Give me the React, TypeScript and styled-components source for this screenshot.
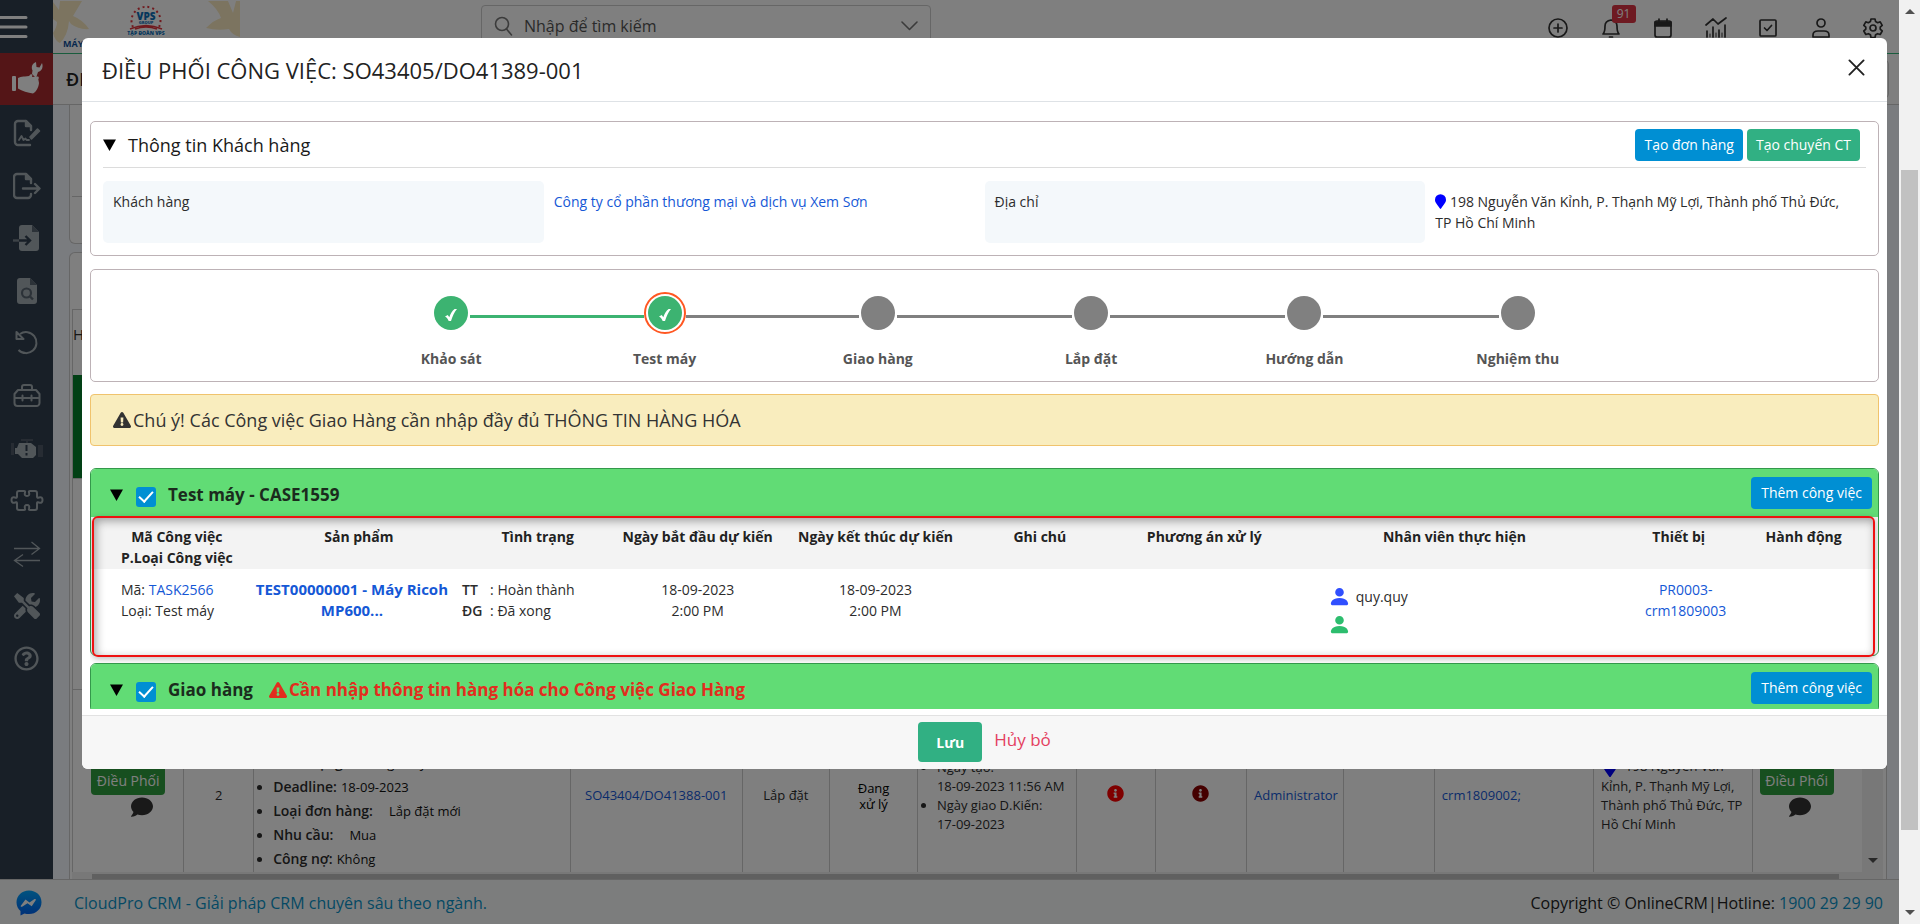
import React from "react";
import styled, { createGlobalStyle, css } from "styled-components";
import {
  FaComment,
  FaInfoCircle,
  FaRegQuestionCircle,
  FaTools,
  FaExclamationTriangle,
} from "react-icons/fa";
import { BsFillPersonFill } from "react-icons/bs";

const GlobalStyle = createGlobalStyle`
  *, *::before, *::after { box-sizing: border-box; }
  html, body { margin: 0; padding: 0; overflow: hidden; }
  body {
    font-family: "Open Sans", "Noto Sans", sans-serif;
    font-size: 14px;
    line-height: 21px;
    color: #2c2c2c;
    background: #fff;
  }
  button, input { font-family: inherit; }
  a { color: #1558d6; text-decoration: none; }
`;

/* ---------- frame ---------- */

const Frame = styled.div`
  display: flex;
  height: 100vh;
`;

const Viewport = styled.div`
  position: relative;
  flex: 1;
  min-width: 0;
  display: flex;
  flex-direction: column;
`;

const ScrollTrack = styled.div`
  width: 21px;
  padding: 0 2px;
  background: #f1f1f1;
  display: flex;
  flex-direction: column;
  align-items: center;
`;

const ScrollThumb = styled.div`
  width: 17px;
  flex: 660;
  background: #c1c1c1;
`;

const TrackGap = styled.div<{ $grow: number }>`
  flex: ${(p) => p.$grow};
`;

const Arrow = styled.div<{ $down?: boolean }>`
  width: 0;
  height: 0;
  margin: 9px 0;
  border: 5px solid transparent;
  ${(p) =>
    p.$down
      ? css`
          border-top-color: #505050;
          border-bottom: 0;
        `
      : css`
          border-bottom-color: #505050;
          border-top: 0;
        `}
`;

/* ---------- application behind the dialog ---------- */

const Main = styled.div`
  flex: 1;
  min-height: 0;
  display: flex;
  overflow: hidden;
`;

const Sidebar = styled.nav`
  width: 53px;
  flex: none;
  background: #303e4e;
  display: flex;
  flex-direction: column;
`;

const Burger = styled.button`
  width: 53px;
  height: 53px;
  flex: none;
  padding: 0;
  border: 0;
  background: transparent;
  display: flex;
  align-items: center;
  svg {
    display: block;
  }
`;

const ActiveNav = styled.a`
  height: 52px;
  flex: none;
  padding-bottom: 4px;
  display: flex;
  align-items: center;
  justify-content: center;
  color: #fff;
  background: #a82a2e;
`;

const NavList = styled.div`
  height: 578px;
  flex: none;
  margin-top: 2px;
  display: flex;
  flex-direction: column;
`;

const NavItem = styled.a`
  flex: 1;
  display: flex;
  align-items: center;
  justify-content: center;
  color: #a3adb3;
`;

const Content = styled.div`
  flex: 1;
  min-width: 0;
  display: flex;
  flex-direction: column;
  background: #f5f8ff;
`;

const Topbar = styled.header`
  height: 54px;
  flex: none;
  display: flex;
  align-items: flex-start;
  background: #fff;
  border-bottom: 1px solid #32b87a;
`;

const Logo = styled.div`
  width: 428px;
  flex: none;
  height: 53px;
`;

const SearchBox = styled.label`
  display: flex;
  align-items: center;
  gap: 8px;
  width: 450px;
  height: 42px;
  margin-top: 5px;
  padding: 0 12px;
  border: 1px solid #ccc;
  border-radius: 4px;
  color: #777;
`;

const SearchInput = styled.input`
  flex: 1;
  min-width: 0;
  border: 0;
  outline: 0;
  background: transparent;
  font-size: 16px;
  color: #555;
  &::placeholder {
    color: #555;
    opacity: 1;
  }
`;

const TopIcons = styled.div`
  width: 345px;
  margin-left: auto;
  margin-right: 11px;
  height: 55px;
  display: flex;
  align-items: center;
  justify-content: space-between;
`;

const IconButton = styled.button`
  position: relative;
  width: 30px;
  height: 30px;
  padding: 0;
  border: 0;
  background: transparent;
  color: #333;
  display: flex;
  align-items: center;
  justify-content: center;
`;

const Badge = styled.span`
  position: absolute;
  left: 16px;
  top: -8px;
  width: 24px;
  height: 18px;
  border-radius: 3px;
  background: #dc3545;
  color: #fff;
  font-size: 12px;
  line-height: 18px;
  text-align: center;
`;

const TitleBar = styled.div`
  height: 51px;
  flex: none;
  padding: 0 10px 0 13px;
  display: flex;
  align-items: center;
  justify-content: space-between;
  background: #fff;
  border-bottom: 1px solid #ccc;
  font-size: 18px;
  font-weight: 600;
  color: #222;
`;

const TitleTool = styled.div`
  width: 120px;
  height: 38px;
  border: 1px solid #ccc;
  border-radius: 4px;
`;

const Panels = styled.div`
  flex: 1;
  min-height: 0;
  padding: 0 12px 0 16px;
  display: flex;
  flex-direction: column;
  gap: 8px;
`;

const FilterPanel = styled.div`
  height: 139px;
  flex: none;
  padding: 91px 2px 0;
  border: 1px solid #ccc;
  border-top: 0;
  border-radius: 0 0 6px 6px;
  background: #fff;
`;

const Rule = styled.div`
  border-top: 1px solid #ccc;
`;

const ListPanel = styled.div`
  flex: 1;
  min-height: 0;
  padding: 56px 3px 0 2px;
  border: 1px solid #ccc;
  border-bottom: 0;
  border-radius: 6px 6px 0 0;
  background: #fff;
  display: flex;
  flex-direction: column;
`;

const ListArea = styled.div`
  flex: 1;
  min-height: 0;
  display: flex;
  border-top: 1px solid #ccc;
`;

const ListClip = styled.div`
  flex: 1;
  min-width: 0;
  overflow: hidden;
  border-left: 1px solid #ccc;
`;

const ListScroll = styled.div`
  width: 21px;
  background: #f1f1f1;
  display: flex;
  flex-direction: column;
  justify-content: flex-end;
  align-items: center;
`;

const HScroll = styled.div`
  height: 7px;
  flex: none;
  padding: 2px 44px 0 20px;
  background: #f1f1f1;
`;

const HThumb = styled.div`
  height: 5px;
  background: #c1c1c1;
`;

const ListTable = styled.table`
  width: 100%;
  border-collapse: collapse;
  table-layout: fixed;
  font-size: 13px;
  line-height: 19px;
`;

const Col = styled.col<{ $w: number }>`
  width: ${(p) => p.$w}%;
`;

const ListHead = styled.th`
  height: 65px;
  padding: 15px 0 0;
  text-align: left;
  vertical-align: top;
  font-size: 15px;
  font-weight: 400;
`;

const FillCell = styled.td<{ $h: number; $green?: boolean }>`
  height: ${(p) => p.$h}px;
  padding: 0;
  background: ${(p) => (p.$green ? "#05802a" : "#fff")};
  border-bottom: 1px solid #ccc;
`;

const Cell = styled.td<{ $align?: string; $top?: boolean; $pad?: number }>`
  height: 213px;
  padding: ${(p) => (p.$top ? 61 : 0)}px ${(p) => p.$pad ?? 7}px 0;
  border-right: 1px solid #ccc;
  vertical-align: ${(p) => (p.$top ? "top" : "middle")};
  text-align: ${(p) => p.$align ?? "center"};
  &:last-child {
    border-right: 0;
  }
`;

const Facts = styled.ul<{ $tight?: boolean }>`
  margin: 0;
  padding-left: ${(p) => (p.$tight ? 14 : 18)}px;
  line-height: ${(p) => (p.$tight ? 19 : 24)}px;
  text-align: left;
`;

const FactName = styled.span`
  font-size: 14px;
  font-weight: 600;
  margin-right: 4px;
`;

const FactValue = styled.span<{ $wide?: boolean }>`
  margin-left: ${(p) => (p.$wide ? 12 : 0)}px;
  color: #111;
`;

const Status = styled.div`
  line-height: 16px;
  color: #000;
`;

const DispatchStack = styled.div<{ $shift?: boolean }>`
  padding: 0 ${(p) => (p.$shift ? 0 : 22)}px 10px 0;
  display: flex;
  flex-direction: column;
  align-items: center;
  gap: 1px;
  svg {
    margin-left: ${(p) => (p.$shift ? 28 : 6)}px;
  }
`;

const DispatchButton = styled.button`
  width: 74px;
  height: 32px;
  padding: 4px 0 0;
  border: 0;
  border-radius: 4px;
  background: #2f9e3f;
  color: #fff;
  font-size: 14px;
  line-height: 20px;
  white-space: nowrap;
`;

const PageFooter = styled.footer`
  height: 45px;
  flex: none;
  padding: 2px 16px 0;
  display: flex;
  align-items: center;
  background: #f8fbfa;
  border-top: 1px solid #ccc;
  font-size: 16px;
  color: #222;
  a {
    color: #0a93c9;
  }
`;

const FooterLink = styled.a`
  margin-left: 32px;
  margin-right: auto;
`;

/* ---------- dialog ---------- */

const Backdrop = styled.div`
  position: absolute;
  inset: 0;
  padding: 38px 12px 0 82px;
  background: rgba(0, 0, 0, 0.5);
`;

const Dialog = styled.section`
  height: calc(100vh - 193px);
  display: flex;
  flex-direction: column;
  background: #fff;
  border-radius: 6px;
  overflow: hidden;
`;

const DialogHeader = styled.header`
  height: 64px;
  flex: none;
  padding: 0 22px 0 20px;
  display: flex;
  align-items: center;
  justify-content: space-between;
  border-bottom: 1px solid #dee2e6;
`;

const DialogTitle = styled.h1`
  margin: 0;
  font-size: 22px;
  line-height: 28px;
  font-weight: 400;
  color: #222;
`;

const CloseButton = styled.button`
  width: 17px;
  height: 17px;
  margin-bottom: 4px;
  padding: 0;
  border: 0;
  background: transparent;
  color: #222;
  svg {
    display: block;
  }
`;

const DialogBody = styled.div`
  flex: 1;
  min-height: 0;
  margin: 0 8px 6px;
  padding-top: 19px;
  overflow: hidden;
`;

const Card = styled.section`
  border: 1px solid #bdb2b6;
  border-radius: 5px;
  margin-bottom: 13px;
`;

const CardHeader = styled.header`
  height: 46px;
  margin: 0 12px;
  padding-right: 6px;
  display: flex;
  align-items: center;
  border-bottom: 1px solid #dcdcdc;
`;

const Toggle = styled.button`
  width: 13px;
  height: 12px;
  flex: none;
  padding: 0;
  border: 0;
  background: transparent;
  color: #000;
  svg {
    display: block;
  }
`;

const CardTitle = styled.h2`
  margin: 0 auto 0 12px;
  font-size: 18px;
  line-height: 24px;
  font-weight: 400;
  color: #1a1a1a;
`;

const ActionButton = styled.button<{ $green?: boolean }>`
  height: 32px;
  margin-left: 4px;
  padding: 0 9px;
  border: 0;
  border-radius: 4px;
  background: ${(p) => (p.$green ? "#31b083" : "#008fd3")};
  color: #fff;
  font-size: 14px;
  line-height: 20px;
  white-space: nowrap;
`;

const Fields = styled.dl`
  margin: 0;
  padding: 13px 12px 12px;
  display: grid;
  grid-template-columns: repeat(4, 1fr);
`;

const FieldName = styled.dt`
  min-height: 62px;
  padding: 10px 10px;
  border-radius: 5px;
  background: #f4f8fb;
`;

const FieldValue = styled.dd`
  margin: 0;
  padding: 10px 10px;
  svg {
    vertical-align: -2px;
  }
`;

const Steps = styled.ol`
  list-style: none;
  max-width: 1280px;
  height: 111px;
  margin: 0 auto;
  padding: 22px 0 0;
  display: flex;
`;

const Step = styled.li`
  flex: 1;
  text-align: center;
  font-weight: 700;
  font-size: 14px;
  color: #555;
`;

const StepRow = styled.div`
  height: 42px;
  margin-bottom: 14px;
  display: flex;
  align-items: center;
  justify-content: center;
`;

const StepLine = styled.span<{ $tone: "none" | "done" | "todo" }>`
  flex: 1;
  height: 3px;
  margin-top: 6px;
  background: ${(p) => (p.$tone === "none" ? "transparent" : p.$tone === "done" ? "#3cb371" : "#808080")};
`;

const StepDot = styled.span<{ $done?: boolean; $current?: boolean }>`
  width: 34px;
  height: 34px;
  flex: none;
  margin: 0 2px;
  border-radius: 50%;
  display: flex;
  align-items: center;
  justify-content: center;
  color: #fff;
  background: ${(p) => (p.$done ? "#3cb371" : "#808080")};
  svg {
    margin-top: 4px;
  }
  ${(p) =>
    p.$current &&
    css`
      width: 42px;
      height: 42px;
      margin: 0;
      border: 2px solid #ff5722;
      padding: 2px;
      background-clip: content-box;
    `}
`;

const Notice = styled.p`
  margin: -1px 0 22px;
  height: 52px;
  padding: 0 22px;
  display: flex;
  align-items: center;
  gap: 2px;
  border: 1px solid #f0c36d;
  border-radius: 4px;
  background: #f9edbe;
  font-size: 18px;
  color: #333;
`;

const Group = styled.section`
  position: relative;
  margin-bottom: 7px;
  border: 1px solid #34984b;
  border-radius: 6px;
`;

const GroupHeader = styled.header`
  height: 48px;
  padding: 4px 6px 0 19px;
  display: flex;
  align-items: center;
  background: #61dc75;
  border-radius: 5px 5px 0 0;
  ${ActionButton} {
    margin-bottom: 5px;
    padding: 0 10px;
  }
`;

const CheckLabel = styled.label`
  margin: 0 auto 0 13px;
  display: flex;
  align-items: center;
  gap: 12px;
  font-size: 17px;
  line-height: 24px;
  font-weight: 700;
  color: #1b2b1d;
`;

const Check = styled.input`
  appearance: none;
  position: relative;
  width: 20px;
  height: 20px;
  margin: 4px 0 0;
  border-radius: 3px;
  background: #008fd3;
  &::after {
    content: "";
    position: absolute;
    left: 6px;
    top: 1px;
    width: 8px;
    height: 14px;
    border: solid #fff;
    border-width: 0 2px 2px 0;
    transform: rotate(42deg);
  }
`;

const GroupWarning = styled.span`
  margin-left: 4px;
  display: flex;
  align-items: center;
  gap: 2px;
  color: #e22d1e;
`;

const TaskTable = styled.table`
  width: 100%;
  table-layout: fixed;
  border-collapse: collapse;
`;

const TaskHead = styled.th<{ $shift?: number; $end?: number }>`
  height: 52px;
  padding: 9px ${(p) => p.$end ?? 0}px 0 ${(p) => p.$shift ?? 0}px;
  vertical-align: top;
  text-align: center;
  background: #f3f3f3;
  color: #222;
  font-weight: 700;
  line-height: 21px;
`;

const TaskCell = styled.td<{ $shift?: number; $left?: number; $top?: number }>`
  height: 86px;
  padding: ${(p) => p.$top ?? 10}px 0 0 ${(p) => p.$left ?? p.$shift ?? 0}px;
  vertical-align: top;
  text-align: ${(p) => (p.$left ? "left" : "center")};
`;

const StateGrid = styled.dl`
  margin: 0;
  display: grid;
  grid-template-columns: 28px 1fr;
  dt {
    font-weight: 600;
  }
  dd {
    margin: 0;
  }
`;

const ProductLink = styled.a`
  font-size: 15px;
  font-weight: 700;
`;

const Staff = styled.div<{ $color: string }>`
  height: 28px;
  display: flex;
  align-items: center;
  gap: 5px;
  svg {
    color: ${(p) => p.$color};
  }
`;

const Highlight = styled.div`
  position: absolute;
  left: 1px;
  right: 3px;
  top: 47px;
  bottom: -2px;
  border: 2px solid #ee1111;
  border-radius: 6px;
  box-shadow: inset 2px 3px 10px rgba(0, 0, 0, 0.35), 0 2px 6px rgba(0, 0, 0, 0.25);
  pointer-events: none;
`;

const DialogFooter = styled.footer`
  height: 54px;
  flex: none;
  padding-bottom: 1px;
  display: flex;
  align-items: center;
  justify-content: center;
  gap: 12px;
  border-top: 1px solid #e2e2e2;
  background: #f7f7f7;
`;

const SaveButton = styled.button`
  width: 64px;
  height: 40px;
  padding: 0;
  border: 0;
  border-radius: 4px;
  background: #31b083;
  color: #fff;
  font-size: 14px;
  font-weight: 700;
`;

const CancelLink = styled.a`
  margin-bottom: 5px;
  font-size: 17px;
  color: #e4405f;
`;

/* ---------- drawings ---------- */

const line = { fill: "none", stroke: "currentColor", strokeWidth: 2, strokeLinecap: "round", strokeLinejoin: "round" } as const;

const BurgerIcon = () => (
  <svg width="28" height="26" viewBox="0 0 28 26" stroke="#fff" strokeWidth="3" strokeLinecap="round">
    <path d="M0 3.500H26M0 13H26M0 22.500H26" />
  </svg>
);

const HandWrenchIcon = () => (
  <svg width="34" height="34" viewBox="0 0 34 34" fill="currentColor">
    <rect x="2" y="16" width="4" height="15" rx="1" />
    <path d="M8 18q3-2 7-1.500l4-.5 2-2q2 .5 1 3l6-.5c1 .5 1 2 .3 2.700L29 23c-.5 5-3 9-6 10.500-5-.5-11-2.500-15-5z" />
    <path d="M26 2c-4 1.500-5 5-3.500 8.500L22 14l4 4 2-6c4-1 5.500-5 4-9l-2.500 4.500-3-.5z" />
  </svg>
);

const SignatureIcon = () => (
  <svg width="28" height="28" viewBox="0 0 28 28" {...line} strokeWidth="2.400">
    <path d="M17 26H5a3 3 0 0 1-3-3V5a3 3 0 0 1 3-3h8l5 5v4" />
    <path d="M13 2v5h5z" fill="currentColor" />
    <path d="M6 21l2.500-4 2 4 2-1.500 1 1.500H16" strokeWidth="1.800" />
    <path d="M17 18l7.500-8 2 2-8 8z" fill="currentColor" strokeWidth="1.600" />
  </svg>
);

const ExportIcon = () => (
  <svg width="28" height="28" viewBox="0 0 28 28" {...line} strokeWidth="2.400">
    <path d="M18 11V7l-5-5H4a3 3 0 0 0-3 3v18a3 3 0 0 0 3 3h11a3 3 0 0 0 3-3v-1" />
    <path d="M13 2v5h5z" fill="currentColor" />
    <path d="M10 16.500h16M22 12l4.500 4.500L22 21" />
  </svg>
);

const ImportIcon = () => (
  <svg width="28" height="28" viewBox="0 0 28 28">
    <path d="M9 1h10l7 7v16a3 3 0 0 1-3 3H9a3 3 0 0 1-3-3V4a3 3 0 0 1 3-3z" fill="currentColor" />
    <path d="M19 1v7h7z" fill="#596571" />
    <path d="M6 16.500h11M12.500 12l4.500 4.500-4.500 4.500" fill="none" stroke="#303e4e" strokeWidth="2.400" />
    <path d="M0 16.500h6" stroke="#7b868e" strokeWidth="2.400" />
  </svg>
);

const FileSearchIcon = () => (
  <svg width="28" height="28" viewBox="0 0 28 28">
    <path d="M7 1h10l7 7v16a3 3 0 0 1-3 3H7a3 3 0 0 1-3-3V4a3 3 0 0 1 3-3z" fill="currentColor" />
    <path d="M17 1v7h7z" fill="#596571" />
    <circle cx="13.500" cy="16" r="4.500" fill="none" stroke="#596571" strokeWidth="2.200" />
    <path d="M17 19.500l3 3" stroke="#596571" strokeWidth="2.400" />
  </svg>
);

const UndoIcon = () => (
  <svg width="28" height="28" viewBox="0 0 28 28" {...line} strokeLinecap="butt">
    <path d="M7 5A10.500 10.500 0 1 1 5.500 21" />
    <path d="M3.500 3v7h7z" />
  </svg>
);

const ToolboxIcon = () => (
  <svg width="28" height="28" viewBox="0 0 28 28" {...line}>
    <path d="M5 8h18l3.500 4v9a3 3 0 0 1-3 3h-19a3 3 0 0 1-3-3v-9zM9 8V5q0-2 2-2h6q2 0 2 2v3M2 16h6M11 16h6M20 16h6M9.500 13.500v5M18.500 13.500v5" />
  </svg>
);

const EngineIcon = () => (
  <svg width="34" height="24" viewBox="0 0 34 24">
    <g fill="#4e5966">
      <path d="M1 6h3v12H1zM11 2h12v2H11zM16 3h2v4h-2zM28 8h5v12h-5z" />
    </g>
    <path d="M9 6h12l5 4v8l-3 3H12l-4-4H5v-6h2z" fill="currentColor" />
    <path d="M16.500 8v6M16.500 16v2.500" stroke="#303e4e" strokeWidth="2" />
  </svg>
);

const PuzzleIcon = () => (
  <svg width="34" height="24" viewBox="0 0 34 24" {...line}>
    <path d="M9 2h5q1.500 0 1 1.500-1 3.500 2 3.500t2-3.500Q18.500 2 20 2h5q2 0 2 2v3.500q0 2 2 1 3.500-1 3.500 2.500T29 13.500q-2-1-2 1V19q0 2-2 2h-5q-1.500 0-1-1.500 1-3.500-2-3.500t-2 3.500q.5 1.500-1 1.500H9q-2 0-2-2v-4.500q0-2-2-1-3.500 1-3.500-2.500T5 8.500q2 1 2-1V4q0-2 2-2z" />
  </svg>
);

const ExchangeIcon = () => (
  <svg width="28" height="28" viewBox="0 0 28 28" fill="none" stroke="currentColor" strokeWidth="1.300">
    <path d="M1 8.500h25M18.500 2l8 6.500-8 6M27 20.500H2M10 14.500l-8.500 6 8.500 6" />
  </svg>
);

const CheckMark = () => (
  <svg width="14" height="14" viewBox="0 0 14 14" fill="#fff" aria-hidden="true">
    <path d="M1 8.500L3.800 7l1.500 2.200C6.400 5.900 8.200 2.500 10.600 1H13C10.300 4 8.400 8.600 7 13H4.700C3.800 10.900 2.700 9.600 1 8.500z" />
  </svg>
);

const Triangle = () => (
  <svg width="13" height="12" viewBox="0 0 13 12" fill="currentColor">
    <path d="M0 .5h13L6.500 12z" />
  </svg>
);

const Pin = ({ large }: { large?: boolean }) => (
  <svg width={large ? 14 : 11} height={large ? 18 : 15} viewBox="0 0 384 512" fill="#0000ff" aria-hidden="true">
    <path d="M172 502C27 292 0 270 0 192a192 192 0 0 1 384 0c0 78-27 100-172 310a24 24 0 0 1-40 0z" />
  </svg>
);

const PinSlot = styled.span`
  display: inline-block;
  height: 18px;
  margin: 0 8px 0 2px;
  vertical-align: -6px;
`;

const MessengerIcon = () => (
  <svg width="26" height="26" viewBox="0 0 26 26">
    <defs>
      <linearGradient id="msg" x1="0" y1="0" x2="0" y2="1">
        <stop offset="0" stopColor="#00a6ff" />
        <stop offset="1" stopColor="#0060f0" />
      </linearGradient>
    </defs>
    <path d="M13 0.500C5.800.5.500 5.700.5 12.300c0 3.600 1.500 6.700 4 8.800v4.400l4-2.100c1.400.4 3 .6 4.500.6 7.200 0 12.500-5.200 12.500-11.800S20.200.5 13 .5z" fill="url(#msg)" />
    <path d="M4.800 15.800l4.700-6.400 4 3 5-3.300c.9-.6 1.800.2 1.200 1.100l-4 6-4.200-3-5 3.300c-1 .7-2.200.2-1.700-.7z" fill="#fff" />
  </svg>
);

const CompanyLogo = () => (
  <svg width="190" height="53" viewBox="0 0 190 53">
    <g fill="#f8e9c0">
      <path d="M0 2l6 8 1-9h22l-9 15q10 4 16 13-10 1-18-5l-2-3q-1 14-9 22-5-2-7-10 4-6 4-11l-4-3z" />
      <path d="M155 1h20l5 12 3-12h4v36q-8-2-11-8-12 2-23-1 8-8 15-10-3-9-13-17z" />
    </g>
    <path d="M80 27a14.500 14 0 1 1 26 0" fill="none" stroke="#e0343c" strokeWidth="2" strokeDasharray="2 3" />
    <path d="M77 29q16-7 32 0M82 29q11-4 22 0" fill="none" stroke="#e0343c" strokeWidth="1.500" />
    <g fontFamily="Open Sans, sans-serif" fontWeight="800" textAnchor="middle" fill="#0c6fb8">
      <text x="93" y="20" fontSize="10">VPS</text>
      <text x="93" y="24" fontSize="4">GROUP</text>
      <text x="93" y="35" fontSize="5">TẬP ĐOÀN VPS</text>
    </g>
    <text x="10" y="47" fontSize="9" fontWeight="700" fontFamily="Open Sans, sans-serif" fill="#0f4f9a">MÁY</text>
  </svg>
);

const SearchIcon = () => (
  <svg width="20" height="20" viewBox="0 0 20 20" {...line} strokeWidth="1.600">
    <circle cx="8" cy="8" r="6.500" />
    <path d="M12.500 13l5 6" />
  </svg>
);

const ChevronIcon = () => (
  <svg width="17" height="10" viewBox="0 0 17 10" {...line} strokeWidth="1.600">
    <path d="M1 1l7.500 7.500L16 1" />
  </svg>
);

const topIcons: { name: string; art: React.ReactNode; badge?: string }[] = [
  { name: "Thêm nhanh", art: <><circle cx="11" cy="11" r="9" /><path d="M11 7v8M7 11h8" /></> },
  { name: "Thông báo", badge: "91", art: <><path d="M3 17q2-2 2-8 0-5 6-6 6 1 6 6 0 6 2 8z" /><path d="M9.500 20h3" /></> },
  { name: "Lịch", art: <><rect x="3" y="4" width="16" height="16" rx="2" /><path d="M3 5h16v4H3z" fill="currentColor" /><path d="M7 2v3M15 2v3" /></> },
  { name: "Báo cáo", art: <><path d="M1 8l7-6 5 5 8-6M2 14v6M8 10v10M14 13v7M20 8v12" /><path d="M5 17v3M11 16v4M17 16v4" strokeWidth="1" /></> },
  { name: "Việc cần làm", art: <><rect x="3" y="3" width="16" height="16" rx="1" /><path d="M7.500 11l2.500 2.500 4.500-5" /></> },
  { name: "Tài khoản", art: <><circle cx="11" cy="6" r="4" /><path d="M3 20v-2q0-4 5-4h6q5 0 5 4v2z" /></> },
  { name: "Cài đặt", art: <><circle cx="11" cy="11" r="3" /><path d="M9 2h4l.6 2.600 2 1.100 2.600-.8 2 3.500-2 1.800v2l2 1.800-2 3.500-2.600-.8-2 1.100L13 20.500H9l-.6-2.700-2-1.100-2.600.8-2-3.500 2-1.800v-2l-2-1.800 2-3.500 2.600.8 2-1.100z" /></> },
];

const navItems: { name: string; art: React.ReactNode }[] = [
  { name: "Hợp đồng", art: <SignatureIcon /> },
  { name: "Xuất", art: <ExportIcon /> },
  { name: "Nhập", art: <ImportIcon /> },
  { name: "Tra cứu", art: <FileSearchIcon /> },
  { name: "Hoàn trả", art: <UndoIcon /> },
  { name: "Dụng cụ", art: <ToolboxIcon /> },
  { name: "Máy lỗi", art: <EngineIcon /> },
  { name: "Linh kiện", art: <PuzzleIcon /> },
  { name: "Chuyển đổi", art: <ExchangeIcon /> },
  { name: "Sửa chữa", art: <FaTools size={26} /> },
  { name: "Trợ giúp", art: <FaRegQuestionCircle size={25} /> },
];

const listCols = [6.2, 3.9, 17.7, 9.6, 4.9, 4.9, 8.9, 4.4, 5.1, 5.4, 5.1, 8.9, 8.9, 6.1];

const steps = [
  { name: "Khảo sát", done: true },
  { name: "Test máy", done: true, current: true },
  { name: "Giao hàng" },
  { name: "Lắp đặt" },
  { name: "Hướng dẫn" },
  { name: "Nghiệm thu" },
];

const taskCols = [8.6, 12, 8.8, 9.1, 10.8, 7.6, 10.8, 17.2, 7.9, 7.2];

/* ---------- parts ---------- */

const Dispatch = ({ shift }: { shift?: boolean }) => (
  <DispatchStack $shift={shift}>
    <DispatchButton type="button">Điều Phối</DispatchButton>
    <FaComment size={22} color="#333" />
  </DispatchStack>
);

const Background = () => (
  <>
    <Main>
      <Sidebar>
        <Burger type="button" aria-label="Menu"><BurgerIcon /></Burger>
        <ActiveNav href="#" aria-label="Điều phối"><HandWrenchIcon /></ActiveNav>
        <NavList>
          {navItems.map((n) => (
            <NavItem key={n.name} href="#" aria-label={n.name}>{n.art}</NavItem>
          ))}
        </NavList>
      </Sidebar>
      <Content>
        <Topbar>
          <Logo><CompanyLogo /></Logo>
          <SearchBox>
            <SearchIcon />
            <SearchInput placeholder="Nhập để tìm kiếm" aria-label="Tìm kiếm" />
            <ChevronIcon />
          </SearchBox>
          <TopIcons>
            {topIcons.map((t) => (
              <IconButton key={t.name} type="button" aria-label={t.name}>
                <svg width="22" height="22" viewBox="0 0 22 22" {...line} strokeWidth="1.700">{t.art}</svg>
                {t.badge && <Badge>{t.badge}</Badge>}
              </IconButton>
            ))}
          </TopIcons>
        </Topbar>
        <TitleBar>ĐI<TitleTool /></TitleBar>
        <Panels>
          <FilterPanel><Rule /></FilterPanel>
          <ListPanel>
            <ListArea>
              <ListClip>
                <ListTable>
                  <colgroup>{listCols.map((w, i) => <Col key={i} $w={w} />)}</colgroup>
                  <thead><tr><ListHead colSpan={14}>H</ListHead></tr></thead>
                  <tbody>
                    <tr><FillCell colSpan={14} $h={103} $green /></tr>
                    <tr><FillCell colSpan={14} $h={211} /></tr>
                    <tr>
                      <Cell><Dispatch shift /></Cell>
                      <Cell>2</Cell>
                      <Cell $top $pad={1}>
                        <Facts>
                          <li><FactName>Tình trạng:</FactName><FactValue $wide>Đang xử lý</FactValue></li>
                          <li><FactName>Deadline:</FactName><FactValue>18-09-2023</FactValue></li>
                          <li><FactName>Loại đơn hàng:</FactName><FactValue $wide>Lắp đặt mới</FactValue></li>
                          <li><FactName>Nhu cầu:</FactName><FactValue $wide>Mua</FactValue></li>
                          <li><FactName>Công nợ:</FactName><FactValue>Không</FactValue></li>
                        </Facts>
                      </Cell>
                      <Cell><a href="#">SO43404/DO41388-001</a></Cell>
                      <Cell>Lắp đặt</Cell>
                      <Cell $pad={20}><Status>Đang xử lý</Status></Cell>
                      <Cell $pad={5}>
                        <Facts $tight>
                          <li>Ngày tạo:<br />18-09-2023 11:56 AM</li>
                          <li>Ngày giao D.Kiến:<br />17-09-2023</li>
                        </Facts>
                      </Cell>
                      <Cell><FaInfoCircle size={17} color="#ff0000" /></Cell>
                      <Cell><FaInfoCircle size={17} color="#8b0000" /></Cell>
                      <Cell><a href="#">Administrator</a></Cell>
                      <Cell />
                      <Cell $align="left"><a href="#">crm1809002;</a></Cell>
                      <Cell $align="left">
                        <PinSlot><Pin large /></PinSlot>198 Nguyễn Văn Kỉnh, P. Thạnh Mỹ Lợi, Thành phố Thủ Đức, TP Hồ Chí Minh
                      </Cell>
                      <Cell><Dispatch /></Cell>
                    </tr>
                  </tbody>
                </ListTable>
              </ListClip>
              <ListScroll><Arrow $down /></ListScroll>
            </ListArea>
            <HScroll><HThumb /></HScroll>
          </ListPanel>
        </Panels>
      </Content>
    </Main>
    <PageFooter>
      <MessengerIcon />
      <FooterLink href="#">CloudPro CRM - Giải pháp CRM chuyên sâu theo ngành.</FooterLink>
      <span>Copyright © OnlineCRM|Hotline: <a href="#">1900 29 29 90</a></span>
    </PageFooter>
  </>
);

const TaskGroupHeader = ({ name, warning }: { name: string; warning?: string }) => (
  <GroupHeader>
    <Toggle type="button" aria-label="Thu gọn"><Triangle /></Toggle>
    <CheckLabel>
      <Check type="checkbox" defaultChecked />
      {name}
      {warning && <GroupWarning><FaExclamationTriangle size={18} />{warning}</GroupWarning>}
    </CheckLabel>
    <ActionButton type="button">Thêm công việc</ActionButton>
  </GroupHeader>
);

const DispatchDialog = () => (
  <Backdrop>
    <Dialog role="dialog" aria-labelledby="dialog-title">
      <DialogHeader>
        <DialogTitle id="dialog-title">ĐIỀU PHỐI CÔNG VIỆC: SO43405/DO41389-001</DialogTitle>
        <CloseButton type="button" aria-label="Đóng">
          <svg width="17" height="17" viewBox="0 0 18 18" {...line}><path d="M1.500 1.500l15 15M16.500 1.500l-15 15" /></svg>
        </CloseButton>
      </DialogHeader>
      <DialogBody>
        <Card>
          <CardHeader>
            <Toggle type="button" aria-label="Thu gọn"><Triangle /></Toggle>
            <CardTitle>Thông tin Khách hàng</CardTitle>
            <ActionButton type="button">Tạo đơn hàng</ActionButton>
            <ActionButton type="button" $green>Tạo chuyến CT</ActionButton>
          </CardHeader>
          <Fields>
            <FieldName>Khách hàng</FieldName>
            <FieldValue><a href="#">Công ty cổ phần thương mại và dịch vụ Xem Sơn</a></FieldValue>
            <FieldName>Địa chỉ</FieldName>
            <FieldValue>
              <Pin /> 198 Nguyễn Văn Kỉnh, P. Thạnh Mỹ Lợi, Thành phố Thủ Đức, TP Hồ Chí Minh
            </FieldValue>
          </Fields>
        </Card>
        <Card>
          <Steps>
            {steps.map((s, i) => (
              <Step key={s.name}>
                <StepRow>
                  <StepLine $tone={i === 0 ? "none" : s.done ? "done" : "todo"} />
                  <StepDot $done={s.done} $current={s.current}>{s.done && <CheckMark />}</StepDot>
                  <StepLine $tone={i === steps.length - 1 ? "none" : steps[i + 1].done ? "done" : "todo"} />
                </StepRow>
                {s.name}
              </Step>
            ))}
          </Steps>
        </Card>
        <Notice>
          <FaExclamationTriangle size={18} />
          Chú ý! Các Công việc Giao Hàng cần nhập đầy đủ THÔNG TIN HÀNG HÓA
        </Notice>
        <Group>
          <TaskGroupHeader name="Test máy - CASE1559" />
          <TaskTable>
            <colgroup>{taskCols.map((w, i) => <Col key={i} $w={w} />)}</colgroup>
            <thead>
              <tr>
                <TaskHead $shift={18}>Mã Công việc<br />P.Loại Công việc</TaskHead>
                <TaskHead $shift={14}>Sản phẩm</TaskHead>
                <TaskHead>Tình trạng</TaskHead>
                <TaskHead>Ngày bắt đầu dự kiến</TaskHead>
                <TaskHead>Ngày kết thúc dự kiến</TaskHead>
                <TaskHead>Ghi chú</TaskHead>
                <TaskHead>Phương án xử lý</TaskHead>
                <TaskHead>Nhân viên thực hiện</TaskHead>
                <TaskHead>Thiết bị</TaskHead>
                <TaskHead $end={20}>Hành động</TaskHead>
              </tr>
            </thead>
            <tbody>
              <tr>
                <TaskCell $left={30}>Mã: <a href="#">TASK2566</a><br />Loại: Test máy</TaskCell>
                <TaskCell><ProductLink href="#">TEST00000001 - Máy Ricoh<br />MP600...</ProductLink></TaskCell>
                <TaskCell $left={3}>
                  <StateGrid>
                    <dt>TT</dt><dd>: Hoàn thành</dd>
                    <dt>ĐG</dt><dd>: Đã xong</dd>
                  </StateGrid>
                </TaskCell>
                <TaskCell>18-09-2023<br />2:00 PM</TaskCell>
                <TaskCell>18-09-2023<br />2:00 PM</TaskCell>
                <TaskCell />
                <TaskCell />
                <TaskCell $left={27} $top={13}>
                  <Staff $color="#304ffe"><BsFillPersonFill size={23} />quy.quy</Staff>
                  <Staff $color="#2dbd6e"><BsFillPersonFill size={23} /></Staff>
                </TaskCell>
                <TaskCell $shift={14}><a href="#">PR0003-<br />crm1809003</a></TaskCell>
                <TaskCell />
              </tr>
            </tbody>
          </TaskTable>
          <Highlight />
        </Group>
        <Group>
          <TaskGroupHeader name="Giao hàng" warning="Cần nhập thông tin hàng hóa cho Công việc Giao Hàng" />
        </Group>
      </DialogBody>
      <DialogFooter>
        <SaveButton type="button">Lưu</SaveButton>
        <CancelLink href="#">Hủy bỏ</CancelLink>
      </DialogFooter>
    </Dialog>
  </Backdrop>
);

const App = () => (
  <>
    <GlobalStyle />
    <Frame>
      <Viewport>
        <Background />
        <DispatchDialog />
      </Viewport>
      <ScrollTrack>
        <Arrow />
        <TrackGap $grow={147} />
        <ScrollThumb />
        <TrackGap $grow={71} />
        <Arrow $down />
      </ScrollTrack>
    </Frame>
  </>
);

export default App;
